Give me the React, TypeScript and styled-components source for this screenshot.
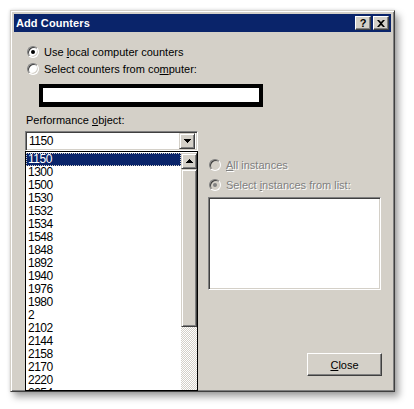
import React from "react";
import styled, { createGlobalStyle } from "styled-components";

const Global = createGlobalStyle`
  html, body { margin: 0; padding: 0; background: #ffffff; }
  body { font-family: "Liberation Sans", Arial, sans-serif; font-size: 11px; color: #000; }
`;

const FACE = "#d4d0c8";

const Page = styled.div`
  padding: 10px 0 0 10px;
  width: 414px;
  height: 409px;
  box-sizing: border-box;
  overflow: hidden;
`;

const Window = styled.div`
  position: relative;
  width: 385px;
  height: 382px;
  box-sizing: border-box;
  background: ${FACE};
  border: 1px solid;
  border-color: ${FACE} #404040 #404040 ${FACE};
  box-shadow: inset 1px 1px #ffffff, inset -1px -1px #808080,
    0 0 3px rgba(0, 0, 0, 0.15), 4px 5px 7px rgba(0, 0, 0, 0.35);
  padding: 3px;
  display: flex;
  flex-direction: column;
`;

const TitleBar = styled.div`
  height: 18px;
  flex: none;
  background: #0a246a;
  display: flex;
  align-items: center;
  justify-content: space-between;
  padding: 0 2px 0 2px;
`;

const Title = styled.span`
  color: #fff;
  font-weight: bold;
  font-size: 11px;
  letter-spacing: 0.1px;
`;

const TitleButtons = styled.div`
  display: flex;
  gap: 2px;
`;

const CapButton = styled.div`
  width: 16px;
  height: 14px;
  box-sizing: border-box;
  background: ${FACE};
  border: 1px solid;
  border-color: #fff #404040 #404040 #fff;
  box-shadow: inset -1px -1px #808080;
  display: flex;
  align-items: center;
  justify-content: center;
  font-weight: bold;
  font-size: 11px;
  line-height: 1;
  color: #000;
`;

const Content = styled.div`
  flex: 1;
  display: flex;
  flex-direction: column;
  padding: 11px 9px 12px 11px;
`;

const RadioRow = styled.label<{ $h?: number; $disabled?: boolean }>`
  display: flex;
  align-items: center;
  height: ${(p) => p.$h ?? 17}px;
  gap: 5px;
  padding-left: ${(p) => (p.$disabled ? 1 : 2)}px;
  color: ${(p) => (p.$disabled ? "#808080" : "#000")};
  text-shadow: ${(p) => (p.$disabled ? "1px 1px #ffffff" : "none")};
  font-size: 11px;
`;

const RadioCircle = styled.span<{ $checked?: boolean; $disabled?: boolean }>`
  position: relative;
  width: 12px;
  height: 12px;
  box-sizing: border-box;
  border-radius: 50%;
  border: 1px solid;
  border-color: #808080 #ffffff #ffffff #808080;
  box-shadow: inset 1px 1px #404040, inset -1px -1px ${FACE};
  background: ${(p) => (p.$disabled ? FACE : "#fff")};
  flex: none;
  &::after {
    content: "";
    display: ${(p) => (p.$checked ? "block" : "none")};
    position: absolute;
    left: 3px;
    top: 3px;
    width: 4px;
    height: 4px;
    border-radius: 50%;
    background: ${(p) => (p.$disabled ? "#808080" : "#000")};
  }
`;

const U = styled.span`
  text-decoration: underline;
`;

const Redacted = styled.div`
  margin: 7px 0 0 14px;
  width: 224px;
  height: 23px;
  box-sizing: border-box;
  border: 4px solid #000;
  border-bottom-width: 5px;
  background: #fff;
`;

const Main = styled.div`
  display: flex;
  gap: 10px;
  margin-top: 6px;
`;

const LeftCol = styled.div`
  width: 173px;
  display: flex;
  flex-direction: column;
`;

const Label = styled.div`
  height: 14px;
  line-height: 14px;
  padding-left: 1px;
  margin-bottom: 4px;
`;

const ComboWrap = styled.div`
  position: relative;
`;

const Combo = styled.div`
  height: 20px;
  box-sizing: border-box;
  border: 1px solid;
  border-color: #808080 #ffffff #ffffff #808080;
  box-shadow: inset 1px 1px #404040, inset -1px -1px ${FACE};
  background: #fff;
  display: flex;
  align-items: center;
  justify-content: space-between;
  padding: 2px;
`;

const ComboText = styled.span`
  padding-left: 1px;
  font-size: 12px;
  letter-spacing: -0.5px;
`;

const ArrowButton = styled.div`
  width: 16px;
  height: 16px;
  box-sizing: border-box;
  background: ${FACE};
  border: 1px solid;
  border-color: ${FACE} #404040 #404040 ${FACE};
  box-shadow: inset 1px 1px #fff, inset -1px -1px #808080;
  display: flex;
  align-items: center;
  justify-content: center;
`;

const Popup = styled.div`
  position: absolute;
  left: 0;
  top: 20px;
  width: 173px;
  height: 240px;
  box-sizing: border-box;
  border: 1px solid #000;
  background: #fff;
  display: flex;
  overflow: hidden;
  z-index: 2;
`;

const Items = styled.div`
  flex: 1;
  padding-top: 1px;
  overflow: hidden;
`;

const Item = styled.div<{ $selected?: boolean }>`
  height: 13px;
  line-height: 13px;
  padding-left: 2px;
  font-size: 12px;
  letter-spacing: -0.5px;
  background: ${(p) => (p.$selected ? "#0a246a" : "transparent")};
  color: ${(p) => (p.$selected ? "#fff" : "#000")};
  outline: ${(p) => (p.$selected ? "1px dotted #d4d0c8" : "none")};
  outline-offset: -1px;
`;

const ScrollBar = styled.div`
  width: 16px;
  flex: none;
  display: flex;
  flex-direction: column;
  padding-top: 1px;
`;

const Thumb = styled.div`
  height: 158px;
  box-sizing: border-box;
  background: ${FACE};
  border: 1px solid;
  border-color: ${FACE} #404040 #404040 ${FACE};
  box-shadow: inset 1px 1px #fff, inset -1px -1px #808080;
`;

const Track = styled.div`
  flex: 1;
  background-color: #fff;
  background-image: conic-gradient(${FACE} 25%, #fff 0 50%, ${FACE} 0 75%, #fff 0);
  background-size: 2px 2px;
`;

const RightCol = styled.div`
  width: 173px;
  padding-top: 42px;
  display: flex;
  flex-direction: column;
`;

const ListBox = styled.div`
  margin-top: 2px;
  height: 93px;
  box-sizing: border-box;
  border: 1px solid;
  border-color: #808080 #ffffff #ffffff #808080;
  box-shadow: inset 1px 1px #404040, inset -1px -1px ${FACE};
  background: #fff;
`;

const Footer = styled.div`
  margin-top: auto;
  display: flex;
  justify-content: flex-end;
`;

const Button = styled.div`
  width: 75px;
  height: 23px;
  box-sizing: border-box;
  background: ${FACE};
  border: 1px solid;
  border-color: #fff #404040 #404040 #fff;
  box-shadow: inset -1px -1px #808080, inset 1px 1px ${FACE};
  display: flex;
  align-items: center;
  justify-content: center;
  font-size: 11px;
`;

const Tri = ({ up }: { up?: boolean }) => (
  <svg width="7" height="4" viewBox="0 0 7 4">
    <path
      d={up ? "M3 0h1v1h1v1h1v1h1v1H0V3h1V2h1V1h1z" : "M0 0h7v1H6v1H5v1H4v1H3V3H2V2H1V1H0z"}
      fill="#000"
    />
  </svg>
);

const items = [
  "1150", "1300", "1500", "1530", "1532", "1534", "1548", "1848", "1892", "1940",
  "1976", "1980", "2", "2102", "2144", "2158", "2170", "2220", "2254",
];

export default function App() {
  return (
    <Page>
      <Global />
      <Window>
        <TitleBar>
          <Title>Add Counters</Title>
          <TitleButtons>
            <CapButton>?</CapButton>
            <CapButton>
              <svg width="8" height="7" viewBox="0 0 8 7">
                <path d="M0 0h2l2 2 2-2h2L5 3.5 8 7H6L4 5 2 7H0l3-3.5z" fill="#000" />
              </svg>
            </CapButton>
          </TitleButtons>
        </TitleBar>
        <Content>
          <RadioRow>
            <RadioCircle $checked />
            <span>
              Use <U>l</U>ocal computer counters
            </span>
          </RadioRow>
          <RadioRow>
            <RadioCircle />
            <span>
              Select counters from co<U>m</U>puter:
            </span>
          </RadioRow>
          <Redacted />
          <Main>
            <LeftCol>
              <Label>
                Performance <U>o</U>bject:
              </Label>
              <ComboWrap>
                <Combo>
                  <ComboText>1150</ComboText>
                  <ArrowButton>
                    <Tri />
                  </ArrowButton>
                </Combo>
                <Popup>
                  <Items>
                    {items.map((it, i) => (
                      <Item key={it} $selected={i === 0}>
                        {it}
                      </Item>
                    ))}
                  </Items>
                  <ScrollBar>
                    <ArrowButton>
                      <Tri up />
                    </ArrowButton>
                    <Thumb />
                    <Track />
                  </ScrollBar>
                </Popup>
              </ComboWrap>
            </LeftCol>
            <RightCol>
              <RadioRow $h={20} $disabled>
                <RadioCircle $disabled />
                <span>
                  <U>A</U>ll instances
                </span>
              </RadioRow>
              <RadioRow $h={20} $disabled>
                <RadioCircle $disabled $checked />
                <span>
                  Select <U>i</U>nstances from list:
                </span>
              </RadioRow>
              <ListBox />
            </RightCol>
          </Main>
          <Footer>
            <Button>
              <span>
                <U>C</U>lose
              </span>
            </Button>
          </Footer>
        </Content>
      </Window>
    </Page>
  );
}
